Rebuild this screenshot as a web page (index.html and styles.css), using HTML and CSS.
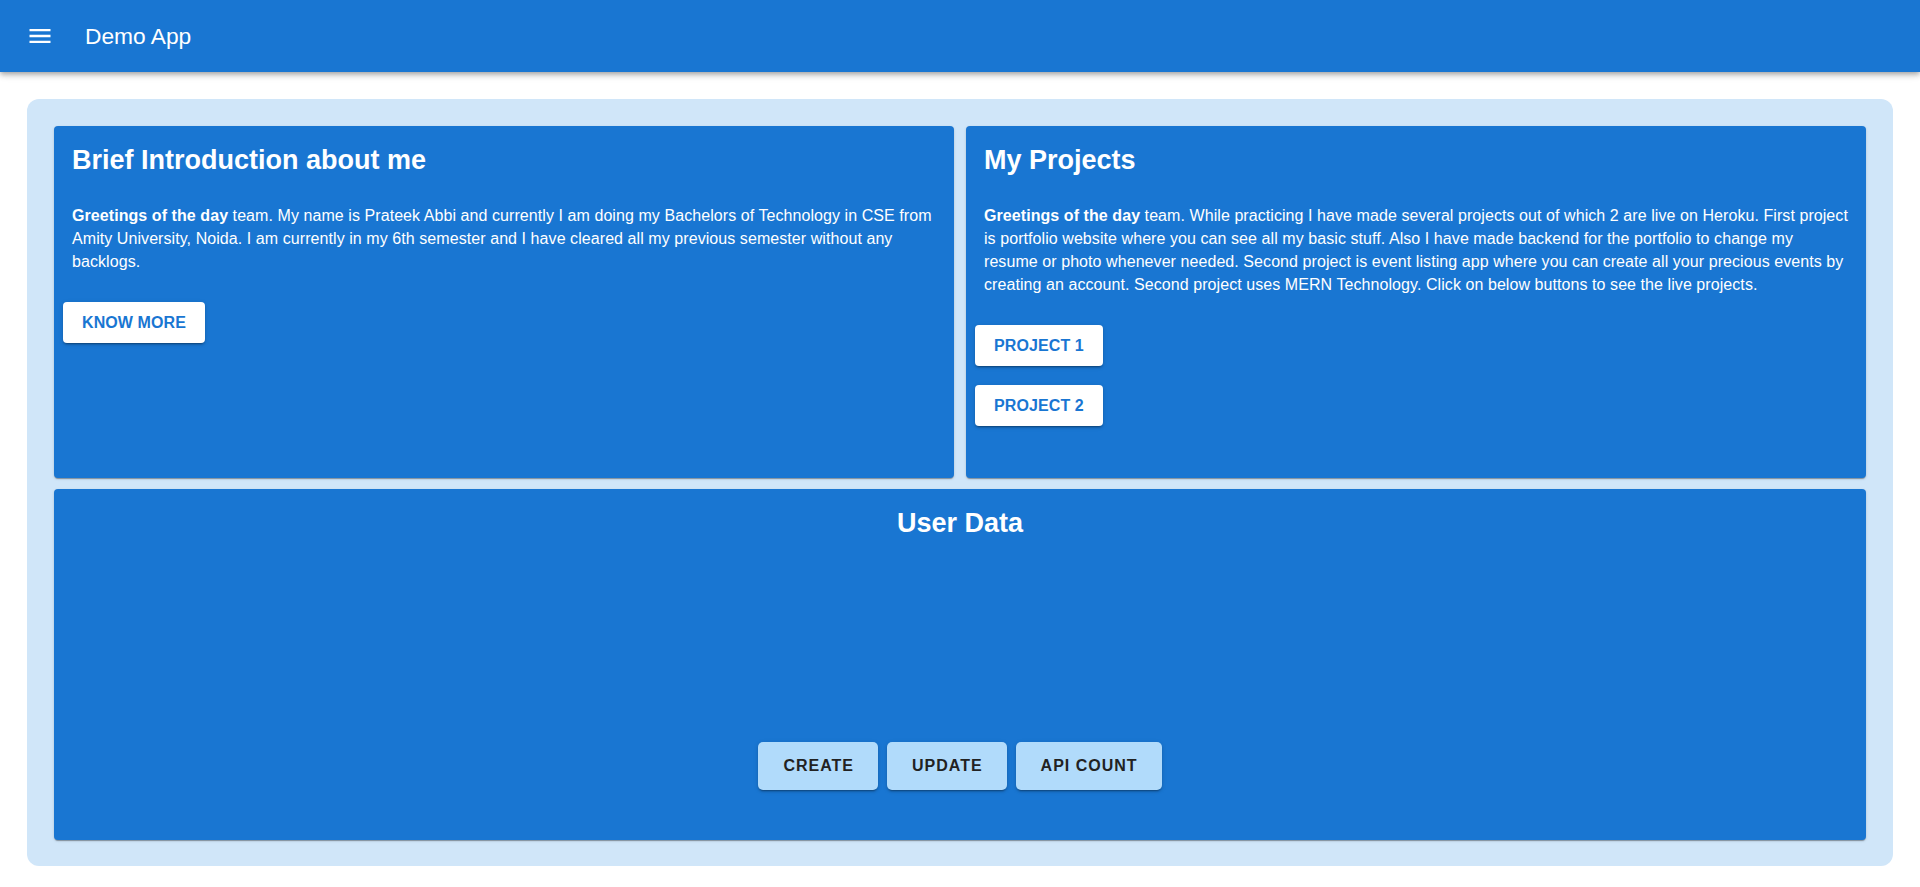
FILE: index.html
```html
<!DOCTYPE html>
<html lang="en">
<head>
<meta charset="utf-8">
<title>Demo App</title>
<link rel="stylesheet" href="styles.css">
</head>
<body>
<header class="appbar">
  <button class="menu-btn" aria-label="menu">
    <svg viewBox="0 0 24 24" width="28" height="28"><path fill="#fff" d="M3 18h18v-2H3v2zm0-5h18v-2H3v2zm0-7v2h18V6H3z"/></svg>
  </button>
  <h1 class="app-title">Demo App</h1>
</header>
<main class="board">
  <section class="card">
    <div class="card-body">
      <h2 class="card-title">Brief Introduction about me</h2>
      <p class="card-text"><b>Greetings of the day</b> team. My name is Prateek Abbi and currently I am doing my Bachelors of Technology in CSE from Amity University, Noida. I am currently in my 6th semester and I have cleared all my previous semester without any backlogs.</p>
    </div>
    <div class="card-actions">
      <button class="btn-white">Know More</button>
    </div>
  </section>
  <section class="card">
    <div class="card-body">
      <h2 class="card-title">My Projects</h2>
      <p class="card-text"><b>Greetings of the day</b> team. While practicing I have made several projects out of which 2 are live on Heroku. First project is portfolio website where you can see all my basic stuff. Also I have made backend for the portfolio to change my resume or photo whenever needed. Second project is event listing app where you can create all your precious events by creating an account. Second project uses MERN Technology. Click on below buttons to see the live projects.</p>
    </div>
    <div class="card-actions">
      <button class="btn-white">Project 1</button>
      <button class="btn-white">Project 2</button>
    </div>
  </section>
  <section class="card card-wide">
    <div class="card-body">
      <h2 class="card-title centered">User Data</h2>
    </div>
    <div class="data-actions">
      <button class="btn-light">Create</button>
      <button class="btn-light">Update</button>
      <button class="btn-light">API Count</button>
    </div>
  </section>
</main>
</body>
</html>
```
FILE: styles.css
```css
* { box-sizing: border-box; }
html, body { margin: 0; padding: 0; }
body {
  font-family: "Liberation Sans", Arial, Helvetica, sans-serif;
  background: #fff;
  color: #fff;
  overflow: hidden;
}
.appbar {
  height: 72px;
  background: #1976d2;
  display: flex;
  align-items: center;
  padding-left: 26px;
  box-shadow: 0 2px 4px -1px rgba(0,0,0,.2), 0 4px 5px 0 rgba(0,0,0,.14), 0 1px 10px 0 rgba(0,0,0,.12);
  position: relative;
  z-index: 2;
}
.menu-btn {
  background: none;
  border: 0;
  padding: 0;
  width: 28px;
  height: 28px;
  display: flex;
  cursor: pointer;
}
.app-title {
  margin: 0 0 0 31px;
  font-size: 22.75px;
  font-weight: 400;
  line-height: 1.6;
  color: #fff;
}
.board {
  margin: 27px 27px 21px;
  padding: 27px 27px 26px;
  background: #d0e6f9;
  border-radius: 12px;
  display: grid;
  grid-template-columns: 1fr 1fr;
  grid-template-rows: 352px 351px;
  column-gap: 12px;
  row-gap: 11px;
}
.card {
  background: #1976d2;
  border-radius: 4px;
  box-shadow: 0 2px 1px -1px rgba(0,0,0,.2), 0 1px 1px 0 rgba(0,0,0,.14), 0 1px 3px 0 rgba(0,0,0,.12);
  display: flex;
  flex-direction: column;
}
.card-wide { grid-column: 1 / -1; }
.card-body { padding: 18px 17px 0 18px; }
.card-title {
  margin: 0 0 28px;
  font-size: 27px;
  font-weight: 700;
  line-height: 33.3px;
  color: #fff;
}
.centered { text-align: center; }
.card-wide .card-body { padding: 18px 18px 0; }
.card-text {
  margin: 0;
  font-size: 16px;
  letter-spacing: 0.07px;
  line-height: 22.88px;
  color: #fff;
}
.card-text b { font-weight: 700; }
.card-actions {
  margin-top: 28px;
  padding: 0 9px;
  display: flex;
  flex-direction: column;
  align-items: flex-start;
  gap: 19px;
}
.btn-white {
  font-family: inherit;
  background: #fff;
  color: #1976d2;
  font-size: 16px;
  letter-spacing: 0.1px;
  font-weight: 700;
  text-transform: uppercase;
  line-height: 25px;
  padding: 8px 19px;
  border: 0;
  border-radius: 4px;
  box-shadow: 0 3px 1px -2px rgba(0,0,0,.2), 0 2px 2px 0 rgba(0,0,0,.14), 0 1px 5px 0 rgba(0,0,0,.12);
}
.data-actions {
  margin-top: auto;
  margin-bottom: 50px;
  display: flex;
  justify-content: center;
  gap: 9px;
}
.btn-light {
  font-family: inherit;
  background: #b1dbfb;
  color: #222;
  font-size: 16px;
  font-weight: 700;
  letter-spacing: 1px;
  text-transform: uppercase;
  height: 48px;
  padding: 0 24px 0 25px;
  border: 0;
  border-radius: 5px;
  box-shadow: 0 3px 1px -2px rgba(0,0,0,.2), 0 2px 2px 0 rgba(0,0,0,.14), 0 1px 5px 0 rgba(0,0,0,.12);
}
```
